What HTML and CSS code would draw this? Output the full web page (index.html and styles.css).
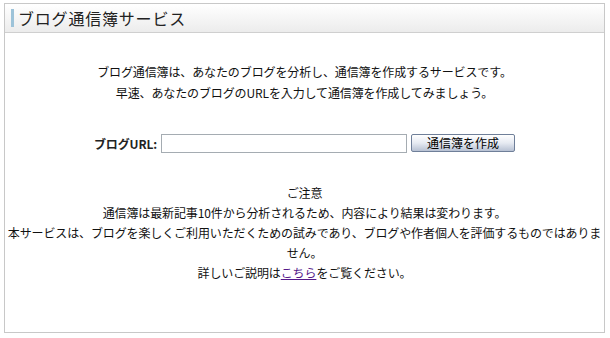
FILE: index.html
```html
<!DOCTYPE html>
<html lang="ja">
<head>
<meta charset="utf-8">
<title>ブログ通信簿サービス</title>
<link rel="stylesheet" href="styles.css">
</head>
<body>
<div class="box">
  <div class="box-header">
    <span class="accent"></span>
    <h1 class="title">ブログ通信簿サービス</h1>
  </div>
  <div class="box-body">
    <p class="intro">ブログ通信簿は、あなたのブログを分析し、通信簿を作成するサービスです。<br>早速、あなたのブログのURLを入力して通信簿を作成してみましょう。</p>
    <form class="url-form" onsubmit="return false;">
      <label class="url-label" for="url">ブログURL:</label>
      <input class="url-input" id="url" type="text">
      <button class="url-button" type="button">通信簿を作成</button>
    </form>
    <p class="notice">ご注意<br>通信簿は最新記事10件から分析されるため、内容により結果は変わります。<br>本サービスは、ブログを楽しくご利用いただくための試みであり、ブログや作者個人を評価するものではありません。<br>詳しいご説明は<a class="link" href="#">こちら</a>をご覧ください。</p>
  </div>
</div>
</body>
</html>
```
FILE: styles.css
```css
html, body {
  margin: 0;
  padding: 0;
  background: #fff;
}
body {
  font-family: "Noto Sans CJK JP", "Liberation Sans", sans-serif;
  font-size: 12px;
  color: #111;
  letter-spacing: -0.12px;
}
.box {
  box-sizing: border-box;
  margin: 3px 0 0 4px;
  width: 601px;
  height: 330px;
  border: 1px solid #c8c8c8;
  display: flex;
  flex-direction: column;
}
.box-header {
  box-sizing: border-box;
  height: 29px;
  border-bottom: 1px solid #cfcfcf;
  background: linear-gradient(#ffffff, #ececec);
  display: flex;
  align-items: center;
  padding-left: 6px;
}
.accent {
  width: 3px;
  height: 18px;
  background: #9dc3d9;
  margin-right: 4px;
}
.title {
  margin: 0;
  font-size: 16px;
  font-weight: normal;
  color: #222;
  line-height: 20px;
  letter-spacing: 0.8px;
}
.box-body {
  text-align: center;
  padding-top: 28px;
}
.intro {
  margin: 0;
  line-height: 21px;
}
.url-form {
  margin: 30px 0 0;
  display: flex;
  justify-content: center;
  align-items: center;
  gap: 4px;
  height: 20px;
}
.url-label {
  font-weight: bold;
  color: #222;
}
.url-input {
  box-sizing: border-box;
  width: 246px;
  height: 19px;
  border: 1px solid #a5acb2;
  margin: 0;
  padding: 1px 2px;
}
.url-button {
  box-sizing: border-box;
  width: 104px;
  height: 18px;
  margin: 0;
  padding: 0;
  font-family: inherit;
  font-size: 12px;
  line-height: 14px;
  letter-spacing: 0;
  color: #000;
  border: 1px solid #6f7f99;
  border-radius: 2px;
  background: linear-gradient(#ffffff, #e6eaf2 50%, #b7c1d3);
}
.notice {
  margin: 30px 0 0;
  line-height: 20px;
}
.link {
  color: #551a8b;
  text-decoration: underline;
}
```
